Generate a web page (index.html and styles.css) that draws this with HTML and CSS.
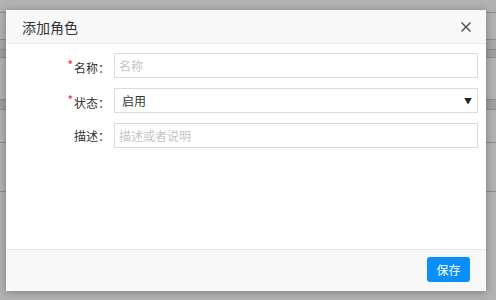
FILE: index.html
```html
<!DOCTYPE html>
<html lang="zh">
<head>
<meta charset="utf-8">
<link rel="stylesheet" href="styles.css">
</head>
<body>
<div class="page">
  <div class="row r1"></div>
  <div class="row r2"></div>
  <div class="row r3"></div>
  <div class="row r4"></div>
  <div class="row r5"></div>
  <div class="row r6"></div>
  <div class="row r7"></div>
  <div class="row r8"></div>
</div>
<div class="overlay">
  <div class="dialog">
    <div class="header">
      <span class="title">添加角色</span>
      <svg class="close" width="12" height="12" viewBox="0 0 12 12"><path d="M1.5 1.5L10.5 10.5M10.5 1.5L1.5 10.5" stroke="#555" stroke-width="1.5" fill="none"/></svg>
    </div>
    <div class="body">
      <div class="field">
        <label class="label"><span class="req">*</span>名称：</label>
        <div class="input placeholder">名称</div>
      </div>
      <div class="field">
        <label class="label"><span class="req">*</span>状态：</label>
        <div class="input select"><span>启用</span><span class="arrow">▼</span></div>
      </div>
      <div class="field">
        <label class="label">描述：</label>
        <div class="input placeholder">描述或者说明</div>
      </div>
    </div>
    <div class="footer">
      <button class="btn">保存</button>
    </div>
  </div>
</div>
</body>
</html>
```
FILE: styles.css
```css
* { box-sizing: border-box; }
html, body { margin: 0; padding: 0; }
body {
  width: 496px; height: 300px; overflow: hidden;
  font-family: "Noto Sans CJK SC", "Noto Sans", sans-serif;
  background: #ffffff;
  position: relative;
}
.page { display: flex; flex-direction: column; }
.row { border-bottom: 1px solid #c8c8c8; }
.r1 { height: 13px; }
.r2 { height: 27px; }
.r3 { height: 10px; background: #f0f0f0; }
.r4 { height: 8px; background: #e4e4e4; }
.r5 { height: 42px; }
.r6 { height: 10px; background: #e4e4e4; }
.r7 { height: 33px; }
.r8 { height: 49px; }
.overlay {
  position: absolute; inset: 0;
  background: rgba(0,0,0,0.3);
  padding: 10px 10px 0 6px;
}
.dialog {
  width: 480px; height: 281px;
  background: #fff;
  display: flex; flex-direction: column;
  box-shadow: 0 1px 8px rgba(0,0,0,0.3);
}
.header {
  height: 34px; flex: none;
  background: #f8f8f8;
  border-bottom: 1px solid #eaeaea;
  display: flex; align-items: center; justify-content: space-between;
  padding: 0 14px 0 16px;
}
.title { font-size: 14px; color: #333; }
.close { display: block; }
.body {
  flex: 1;
  padding: 9px 8px 0 0;
  display: flex; flex-direction: column; gap: 10px;
}
.field { display: flex; align-items: center; height: 25px; }
.label {
  width: 108px; flex: none;
  text-align: right; font-size: 12px; color: #333;
  padding-right: 4px;
}
.req { color: #f5222d; font-size: 12px; vertical-align: 3px; margin-right: 1px; }
.input {
  flex: 1; height: 25px;
  border: 1px solid #dcdcdc;
  font-size: 12px; color: #333;
  display: flex; align-items: center;
  padding: 0 4px;
}
.placeholder { color: #c4c4c4; }
.select { justify-content: space-between; padding: 0 5px 0 7px; }
.arrow { font-size: 8px; color: #222; }
.footer {
  height: 42px; flex: none;
  background: #f8f8f8;
  border-top: 1px solid #e6e6e6;
  display: flex; justify-content: flex-end; align-items: flex-start;
  padding: 7px 16px 0 0;
}
.btn {
  width: 43px; height: 25px;
  background: #0a8ffa; color: #fff;
  border: none; border-radius: 3px;
  font-family: inherit; font-size: 12px;
  padding: 0;
}
```
